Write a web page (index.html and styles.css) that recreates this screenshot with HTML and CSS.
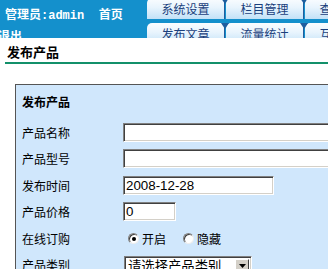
FILE: index.html
```html
<!DOCTYPE html>
<html>
<head>
    <meta charset="utf-8">
    <meta name="viewport" content="width=device-width, initial-scale=1.0">
    <title>发布产品</title>

<link rel="stylesheet" href="styles.css">

</head>
<body>

  <div class="top">
    <div class="admin">
      <div class="admin-line">管理员<span class="mono">:admin&nbsp;&nbsp;</span>首页</div>
      <div class="admin-line out">退出</div>
    </div>
    <div class="tabs">
      <div class="tab-row">
        <div class="tab">系统设置</div>
        <div class="tab">栏目管理</div>
        <div class="tab">查看留言</div>
      </div>
      <div class="tab-row">
        <div class="tab">发布文章</div>
        <div class="tab">流量统计</div>
        <div class="tab">互动管理</div>
      </div>
    </div>
  </div>

  <h2 class="page-title">发布产品</h2>

  <form class="form-box">
    <h3 class="form-title">发布产品</h3>
    <div class="rows">
      <div class="row">
        <label class="label">产品名称</label>
        <input class="text wide" type="text">
      </div>
      <div class="row">
        <label class="label">产品型号</label>
        <input class="text wide" type="text">
      </div>
      <div class="row">
        <label class="label">发布时间</label>
        <input class="text date" type="text" value="2008-12-28">
      </div>
      <div class="row">
        <label class="label">产品价格</label>
        <input class="text price" type="text" value="0">
      </div>
      <div class="row">
        <label class="label">在线订购</label>
        <span class="radios">
          <span class="radio checked"></span><span class="radio-text">开启</span>
          <span class="radio"></span><span class="radio-text">隐藏</span>
        </span>
      </div>
      <div class="row">
        <label class="label">产品类别</label>
        <span class="select">
          <span class="select-text">请选择产品类别</span>
          <span class="select-btn">
            <svg width="7" height="4" viewBox="0 0 7 4"><path d="M0 0h7L3.5 4z" fill="#000"/></svg>
          </span>
        </span>
      </div>
    </div>
  </form>

</body>
</html>
```

FILE: styles.css
```css
/* общие стили */
html, body {
  margin: 0;
  overflow: hidden;
}

body {
  background: #fff;
  font-family: "Noto Sans CJK SC", "Liberation Sans", sans-serif;
  font-size: 12px;
  color: #000;
}

/* шапка */
.top {
  display: flex;
  height: 38px;
  overflow: hidden;
  background: #1490cc;
}

.admin {
  flex: none;
  width: 147px;
  padding-top: 4px;
  color: #fff;
  font-weight: bold;
  line-height: 19px;
  white-space: nowrap;
}

.admin-line {
  padding-left: 5px;
}

.admin-line.out {
  padding-left: 0;
  margin-left: -2px;
}

.mono {
  font-family: "Liberation Mono", monospace;
}

.tabs {
  display: flex;
  flex-direction: column;
  gap: 4px;
  margin-top: -2px;
}

.tab-row {
  display: flex;
  gap: 1px;
}

.tab {
  position: relative;
  flex: none;
  width: 78px;
  height: 21px;
  box-sizing: border-box;
  padding-top: 1px;
  line-height: 20px;
  text-align: center;
  color: #1a3f7c;
  background: linear-gradient(#fbfdff 0%, #e8f4fd 45%, #c2e1f7 100%);
  border-right: 1px solid #1f5d9e;
  border-radius: 5px 0 0 0;
  white-space: nowrap;
}

/* треугольник между вкладками */
.tab::after {
  content: "";
  position: absolute;
  top: 0;
  right: -5px;
  border-left: 4px solid transparent;
  border-right: 4px solid transparent;
  border-top: 6px solid #1f5d9e;
  z-index: 1;
}

/* заголовок страницы */
.page-title {
  margin: 5px 0 0 5px;
  padding: 0 0 1px 2px;
  font-size: 13px;
  line-height: 18px;
  font-weight: bold;
  border-bottom: 2px solid #13906a;
}

/* форма */
.form-box {
  width: 600px;
  margin: 20px 0 0 15px;
  padding-top: 3px;
  background: #d0e7fc;
  border-top: 1px solid #555;
  border-left: 1px solid #555;
}

.form-title {
  margin: 0 0 4px 0;
  padding-left: 6px;
  font-size: 12px;
  line-height: 27px;
  font-weight: bold;
}

.row {
  display: flex;
  align-items: center;
  height: 26.5px;
}

.label {
  flex: none;
  width: 107px;
  box-sizing: border-box;
  padding-left: 6px;
}

.text {
  height: 19px;
  box-sizing: border-box;
  margin: 0;
  padding: 0 2px;
  font-family: "Liberation Sans", sans-serif;
  font-size: 13.33px;
  background: #fff;
  border: 1px solid;
  border-color: #808080 #fff #fff #808080;
  box-shadow: inset 1px 1px #404040, inset -1px -1px #d4d0c8;
  outline: none;
}

.wide {
  width: 260px;
}

.date {
  width: 151px;
}

.price {
  width: 53px;
}

.radios {
  display: flex;
  align-items: center;
}

.radio {
  width: 11px;
  height: 11px;
  box-sizing: border-box;
  margin: 0 3px 0 5px;
  border-radius: 50%;
  background: #fff;
  border: 1px solid #808080;
  border-right-color: #eee;
  border-bottom-color: #eee;
  box-shadow: inset 1px 1px #404040;
  display: flex;
  align-items: center;
  justify-content: center;
}

.radio.checked::after {
  content: "";
  width: 4px;
  height: 4px;
  margin: 1px 0 0 1px;
  border-radius: 50%;
  background: #000;
}

.radio-text + .radio {
  margin-left: 17px;
}

.select {
  display: flex;
  align-items: center;
  width: 128px;
  height: 20px;
  box-sizing: border-box;
  margin-left: 1px;
  margin-top: 2px;
  background: #fff;
  border: 1px solid;
  border-color: #808080 #fff #fff #808080;
  box-shadow: inset 1px 1px #404040, inset -1px -1px #d4d0c8;
  padding: 2px;
}

.select-text {
  flex: 1;
  padding-left: 1px;
  font-size: 13.33px;
  line-height: 16px;
  white-space: nowrap;
  overflow: hidden;
}

.select-btn {
  flex: none;
  width: 14px;
  height: 14px;
  box-sizing: border-box;
  display: flex;
  align-items: center;
  justify-content: center;
  background: #d4d0c8;
  border: 1px solid;
  border-color: #fff #404040 #404040 #fff;
}
```
